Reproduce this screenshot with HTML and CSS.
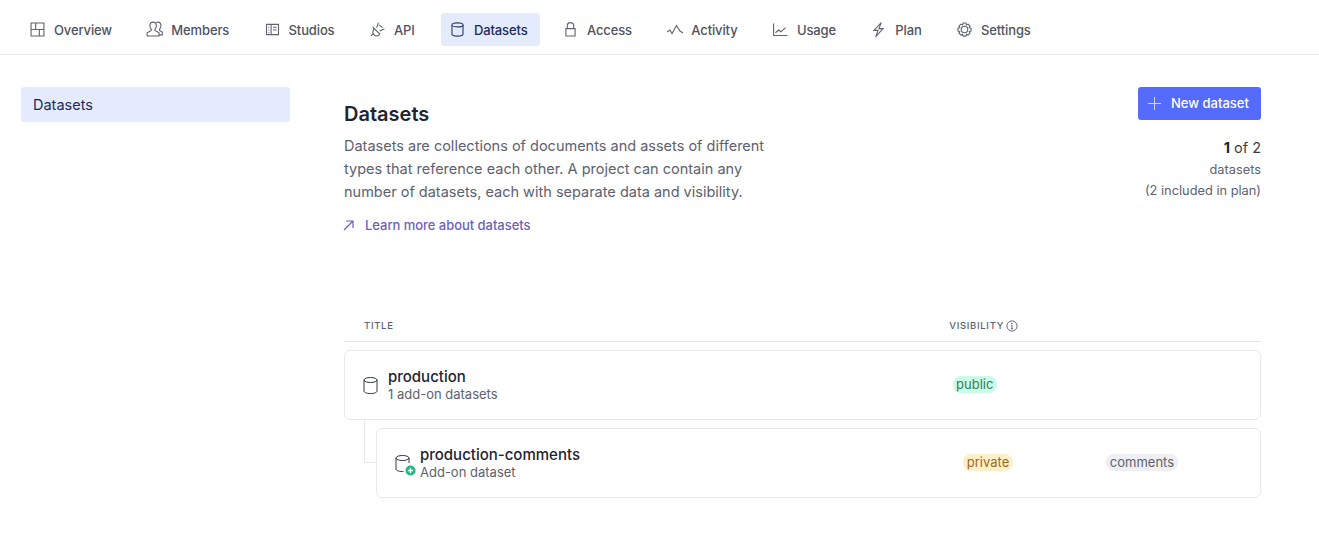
FILE: index.html
```html
<!DOCTYPE html>
<html lang="en">
<head>
  <meta charset="UTF-8">
  <meta name="viewport" content="width=device-width, initial-scale=1.0">
  <title>Datasets</title>
  <link rel="stylesheet" href="styles.css">
</head>
<body>
  <nav class="tabs">
    <a class="tab" href="#">
      <svg class="icon" viewBox="0 0 25 25"><path d="M19.500 19.500h-14v-14h14zM5.500 12.500h14M14.500 19.500v-7M10.500 5.500v7"/></svg>
      Overview
    </a>
    <a class="tab" href="#">
      <svg class="icon" viewBox="0 0 25 25"><path d="M11 4.500c-2.200 0-3.500 1.800-3.500 4 0 1.800.8 3 1.500 3.700v1.300l-4.500 2.500v3.500h13v-3.500L13 13.500v-1.300c.7-.7 1.500-1.900 1.500-3.700 0-2.200-1.300-4-3.500-4zM14.500 4.800c.5-.3 1-.3 1.500-.3 2.200 0 3.500 1.800 3.500 4 0 1.800-.8 3-1.500 3.700v1.300l3 1.800v3h-3.500"/></svg>
      Members
    </a>
    <a class="tab" href="#">
      <svg class="icon" viewBox="0 0 25 25"><path d="M6 6.900h13v11.200H6zM11 6.900v11.200M13 10h4M13 13h4M8 10h1M8 13h1M8 16h1"/></svg>
      Studios
    </a>
    <a class="tab" href="#">
      <svg class="icon" viewBox="0 0 25 25"><path d="M5.500 19.500l3-3M8 10.500l7 7-1 1c-1.700 1.400-3.800 1.200-5.200-.2s-1.700-3.600-.3-5.300zM11.500 10.500l2-5.500M15 14l5-2M14 7.500l4 3"/></svg>
      API
    </a>
    <a class="tab active" href="#">
      <svg class="icon" viewBox="0 0 25 25"><ellipse cx="12.500" cy="7.500" rx="6" ry="2.200"/><path d="M6.500 7.500v10c0 1.400 2.500 2.200 6 2.200s6-.8 6-2.200v-10"/></svg>
      Datasets
    </a>
    <a class="tab" href="#">
      <svg class="icon" viewBox="0 0 25 25"><path d="M7.500 11.500h10v8h-10zM9 11.500v-3c0-2 1.500-3.500 3.500-3.500s3.500 1.500 3.500 3.500v3"/></svg>
      Access
    </a>
    <a class="tab" href="#">
      <svg class="icon" viewBox="0 0 25 25"><path d="M4.300 15.200l3.300-2.200 2.200 3.900 4.900-8.700 3.800 6 3.200 2.100"/></svg>
      Activity
    </a>
    <a class="tab" href="#">
      <svg class="icon" viewBox="0 0 25 25"><path d="M5 6v13h15M7 16l3.500-3 2.500 2 5-4.500"/></svg>
      Usage
    </a>
    <a class="tab" href="#">
      <svg class="icon" viewBox="0 0 25 25"><path d="M15.500 5l-8 8.500H12l-2.500 6.800 8-8.800H13z"/></svg>
      Plan
    </a>
    <a class="tab" href="#">
      <svg class="icon" viewBox="-2 -2 25 25"><circle cx="10.500" cy="10.500" r="3.500"/><path d="M9 3.500h3l.6 2 1.800-.9 2.100 2.100-.9 1.800 2 .6v3l-2 .6.900 1.800-2.100 2.100-1.800-.9-.6 2H9l-.6-2-1.800.9-2.100-2.100.9-1.800-2-.6v-3l2-.6-.9-1.800 2.100-2.100 1.800.9z"/></svg>
      Settings
    </a>
  </nav>

  <div class="layout">
    <aside class="sidebar">
      <a class="side-item" href="#">Datasets</a>
    </aside>

    <main class="content">
      <div class="intro">
        <div class="intro-text">
          <h1>Datasets</h1>
          <p>Datasets are collections of documents and assets of different types that reference each other. A project can contain any number of datasets, each with separate data and visibility.</p>
          <a class="learn" href="#">
            <svg class="icon-small" viewBox="1 1.500 11 11"><path d="M2 11.500L11 2.500M4 2.500h7v7"/></svg>
            Learn more about datasets
          </a>
        </div>
        <div class="quota">
          <button class="new-btn">
            <svg class="icon-plus" viewBox="0 0 15 15"><path d="M7.500 1v13M1 7.500h13"/></svg>
            New dataset
          </button>
          <div class="count"><b>1</b> of 2</div>
          <div class="count-note">datasets</div>
          <div class="count-note">(2 included in plan)</div>
        </div>
      </div>

      <div class="table-head">
        <div class="th th-title">TITLE</div>
        <div class="th">
          VISIBILITY
          <svg class="icon-info" viewBox="0 0 13 13"><circle cx="6.500" cy="6.500" r="5.500"/><path d="M6.500 5.800v3.700M5.300 9.500h2.400M5.500 5.800h1"/><circle class="dot" cx="6.400" cy="3.700" r=".7"/></svg>
        </div>
      </div>

      <div class="row">
        <div class="row-title">
          <svg class="icon-db" viewBox="0 0 21 21"><ellipse cx="10.500" cy="5" rx="6.500" ry="2.500"/><path d="M4 5v11c0 1.500 2.500 2.500 6.500 2.500s6.500-1 6.500-2.500V5"/></svg>
          <div class="row-text">
            <div class="name">production</div>
            <div class="sub">1 add-on datasets</div>
          </div>
        </div>
        <div class="cell"><span class="badge public">public</span></div>
      </div>

      <div class="child">
        <div class="connector"></div>
        <div class="row">
          <div class="row-title">
            <span class="db-wrap">
              <svg class="icon-db" viewBox="0 0 21 21"><ellipse cx="10.500" cy="5" rx="6.500" ry="2.500"/><path d="M4 5v11c0 1.500 2.500 2.500 6.500 2.500h1M17 5v5"/></svg>
              <svg class="icon-add" viewBox="0 0 12 12"><circle cx="6" cy="6" r="5.500"/><path d="M6 3v6M3 6h6"/></svg>
            </span>
            <div class="row-text">
              <div class="name">production-comments</div>
              <div class="sub">Add-on dataset</div>
            </div>
          </div>
          <div class="cell"><span class="badge private">private</span></div>
          <div class="cell"><span class="badge tag">comments</span></div>
        </div>
      </div>
    </main>
  </div>
</body>
</html>
```

FILE: styles.css
```css
body {
  font-family: Inter, 'Noto Sans', sans-serif;
  background: #fff;
  margin: 0;
  color: #1f2430;
}
a {
  text-decoration: none;
}

.tabs {
  display: flex;
  gap: 14.4px;
  height: 55px;
  padding: 13px 21px 0;
  box-sizing: border-box;
  border-bottom: 1px solid #e6e8ec;
}
.tab {
  display: flex;
  align-items: center;
  gap: 5px;
  height: 33px;
  padding: 0 12px 0 5px;
  border-radius: 3px;
  color: #4f5361;
  font-size: 13px;
  font-weight: 500;
  letter-spacing: -0.13px;
}
.tab.active {
  background: #e3ebfd;
  color: #1f2a5c;
}
.icon {
  width: 23px;
  height: 23px;
  fill: none;
  stroke: currentColor;
  stroke-width: 1.2;
  opacity: 0.9;
}

.layout {
  display: flex;
  padding: 32px 58px 0 21px;
}
.sidebar {
  width: 269px;
  margin-right: 54px;
  flex-shrink: 0;
}
.side-item {
  display: block;
  height: 35px;
  line-height: 35px;
  padding-left: 12px;
  background: #e3ebfd;
  border-radius: 3px;
  color: #1f2a5c;
  font-size: 14.5px;
}
.content {
  flex: 1;
}

.intro {
  display: flex;
  justify-content: space-between;
  height: 193px;
}
.intro-text {
  width: 430px;
  padding-top: 15px;
}
h1 {
  margin: 0;
  font-size: 20px;
  line-height: 24px;
  font-weight: 600;
}
.intro-text p {
  margin: 8px 0 0;
  font-size: 14.5px;
  line-height: 23px;
  color: #5d6170;
}
.learn {
  display: flex;
  align-items: center;
  gap: 11px;
  margin-top: 14px;
  margin-left: -1px;
  color: #6e5fc0;
  font-size: 13px;
  font-weight: 500;
  letter-spacing: -0.04px;
}
.icon-small {
  width: 11px;
  height: 11px;
  fill: none;
  stroke: currentColor;
  stroke-width: 1.2;
}

.quota {
  display: flex;
  flex-direction: column;
  align-items: flex-end;
}
.new-btn {
  display: flex;
  align-items: center;
  gap: 9px;
  width: 123px;
  height: 33px;
  padding: 0 0 1px 9px;
  background: #556bfc;
  color: #fff;
  border: none;
  border-radius: 3px;
  font-family: inherit;
  font-size: 13px;
  font-weight: 500;
}
.icon-plus {
  width: 15px;
  height: 15px;
  fill: none;
  stroke: #fff;
  stroke-width: 0.9;
  opacity: 0.8;
}
.count {
  margin-top: 18px;
  font-size: 14.5px;
  line-height: 20px;
  color: #3a3e4a;
}
.count b {
  font-weight: 700;
  color: #1f2430;
}
.count-note {
  margin-top: 3px;
  font-size: 12.8px;
  line-height: 18px;
  color: #5d6170;
}

.table-head {
  display: grid;
  grid-template-columns: 66% 1fr;
  height: 31px;
  line-height: 30px;
  border-bottom: 1px solid #e6e8ec;
  margin-top: 30px;
  margin-bottom: 8px;
}
.th {
  display: flex;
  align-items: center;
  gap: 2px;
  font-size: 9.5px;
  font-weight: 500;
  letter-spacing: 0.7px;
  color: #5d6170;
}
.th-title {
  padding-left: 20px;
}
.icon-info {
  width: 12px;
  height: 12px;
  fill: none;
  stroke: #4a4e5a;
  stroke-width: 0.9;
}
.icon-info .dot {
  fill: #4a4e5a;
  stroke: none;
}

.row {
  display: grid;
  grid-template-columns: 66.4% 16.2% 1fr;
  align-items: center;
  flex: 1;
  height: 70px;
  box-sizing: border-box;
  border: 1px solid #e6e8ec;
  border-radius: 6px;
}
.row-title {
  display: flex;
  align-items: center;
  gap: 7px;
  padding-left: 15px;
}
.row-text {
  padding-top: 1px;
}
.cell {
  display: flex;
  padding-bottom: 1px;
}
.icon-db {
  width: 21px;
  height: 21px;
  fill: none;
  stroke: #2a2e3a;
  stroke-width: 0.95;
}
.db-wrap {
  position: relative;
  display: flex;
}
.icon-add {
  position: absolute;
  right: -3px;
  bottom: -2px;
  width: 11px;
  height: 11px;
  fill: #1fb57f;
}
.icon-add path {
  stroke: #fff;
  stroke-width: 1.5;
}
.name {
  font-size: 15px;
  font-weight: 500;
  line-height: 18px;
  color: #1f2430;
}
.sub {
  font-size: 13px;
  line-height: 17px;
  color: #5d6170;
}
.badge {
  display: inline-block;
  padding: 0 3.5px;
  font-size: 13px;
  line-height: 17px;
  border-radius: 8px;
}
.badge.public {
  background: #ccfbe8;
  color: #2f7f63;
}
.badge.private {
  background: #fdf0c8;
  color: #9a6a27;
}
.badge.tag {
  background: #eeeff3;
  color: #5f6270;
}

.child {
  display: flex;
  margin-top: 8px;
  position: relative;
  padding-left: 32px;
}
.connector {
  position: absolute;
  left: 20px;
  top: -8px;
  width: 12px;
  height: 43px;
  box-sizing: border-box;
  border-left: 1px solid #e6e8ec;
  border-bottom: 1px solid #e6e8ec;
}
```
